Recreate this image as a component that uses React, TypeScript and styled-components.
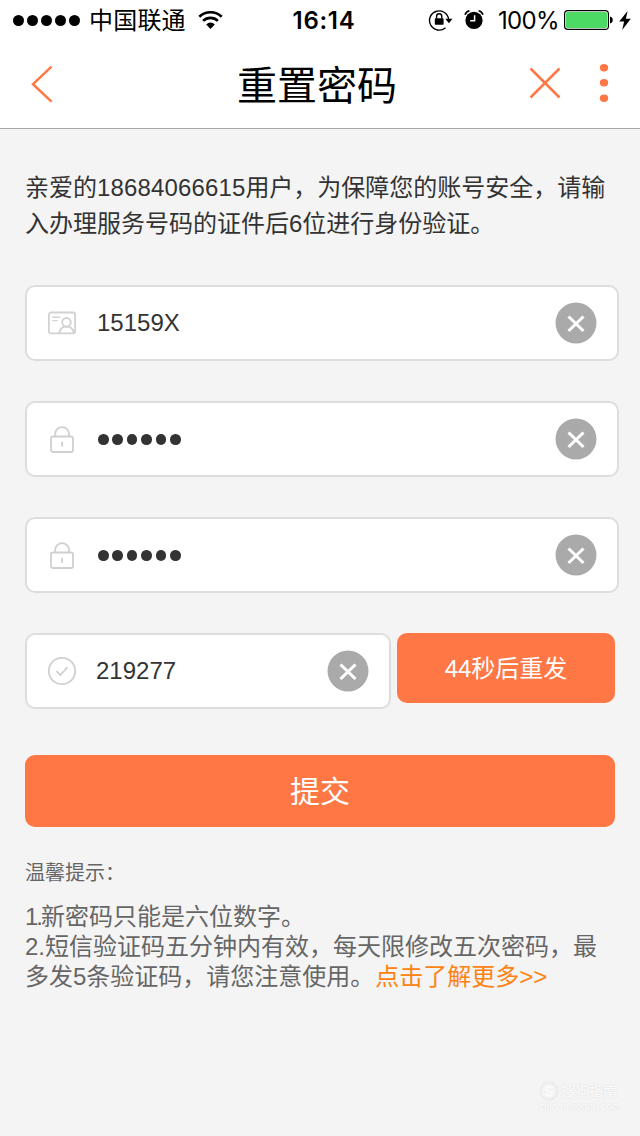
import React from "react";
import styled, { createGlobalStyle } from "styled-components";

const GlobalStyle = createGlobalStyle`
  * { box-sizing: border-box; }
  body {
    margin: 0;
    background: #f4f4f4;
    font-family: "Liberation Sans", "Noto Sans CJK SC", sans-serif;
  }
  button { border: 0; padding: 0; background: none; font: inherit; }
  p, h1, h2 { margin: 0; font-weight: 400; }
  svg { display: block; flex: none; }
`;

const ORANGE = "#ff7744";

const Screen = styled.div`
  width: 640px;
  height: 1136px;
  display: flex;
  flex-direction: column;
  background: #f4f4f4;
  overflow: hidden;
`;

const TopArea = styled.header`
  height: 129px;
  background: #fff;
  border-bottom: 1px solid #a8a8a8;
`;

const StatusBar = styled.div`
  height: 40px;
  display: grid;
  grid-template-columns: 240px 160px 240px;
  align-items: center;
  color: #000;
  font-family: Inter, "Noto Sans CJK SC", sans-serif;
`;

const StatusLeft = styled.div`
  display: flex;
  align-items: center;
  padding-left: 13px;
`;

const Dots = styled.div<{ $gap: number }>`
  display: flex;
  gap: ${(p) => p.$gap}px;
`;

const Dot = styled.i<{ $size: number; $color: string }>`
  width: ${(p) => p.$size}px;
  height: ${(p) => p.$size}px;
  border-radius: 50%;
  background: ${(p) => p.$color};
`;

const Carrier = styled.span`
  margin: 0 12px 0 9px;
  padding-top: 2px;
  font-size: 24px;
  line-height: 38px;
  letter-spacing: 0.2px;
`;

const Clock = styled.span`
  padding: 2px 0 0 8px;
  text-align: center;
  font-size: 24px;
  font-weight: 600;
  line-height: 38px;
  letter-spacing: 0.7px;
`;

const StatusRight = styled.div`
  display: flex;
  align-items: center;
  padding-left: 28px;
`;

const Percent = styled.span`
  width: 60px;
  margin: 0 6px 0 14px;
  padding-top: 2px;
  font-size: 24px;
  line-height: 38px;
  letter-spacing: -0.7px;
  white-space: nowrap;
`;

const IconGap = styled.span<{ $width: number }>`
  flex: 0 0 ${(p) => p.$width}px;
`;

const NavBar = styled.nav`
  height: 88px;
  display: grid;
  grid-template-columns: 160px 314px 166px;
  align-items: center;
`;

const BackButton = styled.button`
  padding-left: 30px;
`;

const Title = styled.h1`
  padding-top: 4px;
  font-size: 40px;
  line-height: 84px;
  text-align: center;
  color: #000;
`;

const NavActions = styled.div`
  display: flex;
  align-items: center;
  gap: 37px;
  padding-left: 54px;
  margin-top: -2px;
`;

const Content = styled.main`
  padding: 41px 21px 0 25px;
`;

const Intro = styled.p`
  width: 586px;
  font-size: 24px;
  line-height: 36px;
  color: #333;
  white-space: nowrap;
`;

const PhoneNumber = styled.span`
  letter-spacing: 0.14px;
`;

const Form = styled.form`
  display: flex;
  flex-direction: column;
  gap: 40px;
  margin-top: 43px;
`;

const Field = styled.div<{ $width?: number }>`
  width: ${(p) => p.$width ?? 594}px;
  height: 76px;
  display: flex;
  align-items: center;
  padding: 0 20px;
  background: #fff;
  border: 2px solid #dddddd;
  border-radius: 10px;
`;

const FieldValue = styled.div<{ $indent?: number }>`
  flex: 1;
  padding-left: ${(p) => p.$indent ?? 19}px;
  font-size: 24px;
  line-height: 32px;
  color: #333;
`;

const PasswordValue = styled(FieldValue)`
  padding-top: 1px;
`;

const CodeRow = styled.div`
  display: flex;
  gap: 6px;
`;

const ResendButton = styled.button`
  width: 218px;
  height: 70px;
  padding-bottom: 4px;
  border-radius: 10px;
  background: ${ORANGE};
  color: #fff;
  font-size: 24px;
`;

const SubmitButton = styled.button`
  width: 590px;
  height: 72px;
  padding-bottom: 5px;
  margin-top: 6px;
  border-radius: 10px;
  background: ${ORANGE};
  color: #fff;
  font-size: 30px;
`;

const Tips = styled.section`
  margin-top: 31px;
  color: #666;
`;

const TipsTitle = styled.h2`
  font-size: 20px;
  line-height: 30px;
`;

const TipsText = styled.p`
  margin-top: 14px;
  font-size: 24px;
  line-height: 30px;
  white-space: nowrap;
`;

const TightNumber = styled.span`
  letter-spacing: -2px;
`;

const MoreLink = styled.a`
  margin-left: 1px;
  color: #ff8212;
`;

const Watermark = styled.footer`
  margin: auto 21px 23px auto;
  width: 80px;
  color: #fbfbfb;
`;

const WatermarkBrand = styled.div`
  display: flex;
  align-items: center;
  gap: 2px;
  font-size: 14px;
  line-height: 20px;
  white-space: nowrap;
  text-shadow: 0 0 2px #dcdcdc;
`;

const WatermarkSite = styled.div`
  font-size: 10px;
  line-height: 12px;
  text-shadow: 0 0 2px #dcdcdc;
`;

const WifiIcon = () => (
  <svg width="25" height="20" viewBox="0 0 25 20" fill="none" stroke="#000">
    <path d="M1.3 6.8C7.5.7 17.5.7 23.7 6.8" strokeWidth="2.7" />
    <path d="M5.1 10.9c4.1-4 10.7-4 14.8 0" strokeWidth="2.7" />
    <path d="M8.2 14.4a6 6 0 0 1 8.6 0L12.5 19z" fill="#000" stroke="none" />
  </svg>
);

const RotationLockIcon = () => (
  <svg width="26" height="24" viewBox="0 0 26 24" fill="none">
    <path d="M17.5 19.7A9.6 9.6 0 1 1 20.6 11" stroke="#000" strokeWidth="1.4" />
    <path d="M17.3 10.8h7.2L20.9 15.2z" fill="#000" />
    <rect x="6.8" y="10.2" width="8.8" height="6.6" rx=".7" fill="#000" />
    <path d="M8.6 10.5V8.4a2.6 2.6 0 0 1 5.2 0v2.1" stroke="#000" strokeWidth="1.4" />
  </svg>
);

const AlarmIcon = () => (
  <svg width="20" height="22" viewBox="0 0 20 22" fill="none">
    <circle cx="10" cy="11.4" r="8.6" fill="#000" />
    <path d="M1 5.7C1.700 3.800 3.400 2.200 5.400 1.700M19 5.700c-.7-1.900-2.400-3.500-4.400-4" stroke="#000" strokeWidth="1.600" />
    <path d="M10.600 6.200v5.600H6.200" stroke="#fff" strokeWidth="1.500" />
  </svg>
);

const BatteryIcon = () => (
  <svg width="49" height="20" viewBox="0 0 49 20">
    <rect x=".6" y=".6" width="43.8" height="18.8" rx="3.2" fill="#fff" stroke="#000" strokeWidth="1.2" />
    <rect x="2" y="2" width="41" height="16" rx="1.8" fill="#4cd964" />
    <path d="M46 6.5c3.7.7 3.7 6.3 0 7z" fill="#000" />
  </svg>
);

const BoltIcon = () => (
  <svg width="12" height="19" viewBox="0 0 12 19">
    <path d="M8.6 0 .2 10.6h4.9L3.2 19 11.8 7.7H6.9z" fill="#000" />
  </svg>
);

const BackIcon = () => (
  <svg width="24" height="38" viewBox="0 0 24 38" fill="none" stroke={ORANGE} strokeWidth="2.5">
    <path d="M21.5 1.7 3 19.2l18.500 17.500" />
  </svg>
);

const CloseIcon = () => (
  <svg width="34" height="34" viewBox="0 0 34 34" fill="none" stroke={ORANGE} strokeWidth="2.5">
    <path d="m2.500 2.500 29 29M31.500 2.500l-29 29" />
  </svg>
);

const MoreIcon = () => (
  <svg width="10" height="38" viewBox="0 0 10 38" fill={ORANGE}>
    <ellipse cx="5" cy="3.8" rx="4.2" ry="3.7" />
    <ellipse cx="5" cy="18.7" rx="4.2" ry="3.7" />
    <ellipse cx="5" cy="34.2" rx="4.2" ry="3.7" />
  </svg>
);

const IdCardIcon = () => (
  <svg width="30" height="24" viewBox="0 0 30 24" fill="none" stroke="#d2d2d2" strokeWidth="1.8">
    <rect x="1.9" y="1.5" width="26.2" height="20.8" rx="2" />
    <path d="M5.3 6.2h8M5.3 9.6h5.4" strokeWidth="1.4" />
    <circle cx="19.500" cy="11.300" r="4.300" />
    <path d="M12.500 22c.3-4 3-6.400 7-6.400s6.800 2.400 7.200 6.400" />
  </svg>
);

const LockIcon = () => (
  <svg width="30" height="30" viewBox="0 0 30 30" fill="none" stroke="#d0d0d0" strokeWidth="1.8">
    <rect x="4" y="12.500" width="22" height="15.500" rx="2" />
    <path d="M8.200 12.300V10a6.900 6.900 0 0 1 13.800 0v2.300M15.100 17.700v5" />
  </svg>
);

const CheckCircleIcon = () => (
  <svg width="30" height="30" viewBox="0 0 30 30" fill="none" stroke="#d0d0d0" strokeWidth="1.8">
    <circle cx="15" cy="15" r="13.200" />
    <path d="m9.400 15.100 4 3.900 7.100-7.900" />
  </svg>
);

const ClearIcon = () => (
  <svg width="42" height="42" viewBox="0 0 42 42">
    <circle cx="21" cy="21" r="20.500" fill="#aaa" />
    <path d="m13.500 14.500 15 14.500M28.500 14.500 13.500 29" stroke="#fff" strokeWidth="3.100" />
  </svg>
);

const DotRow = ({ count, size, gap, color }: { count: number; size: number; gap: number; color: string }) => (
  <Dots $gap={gap}>
    {Array.from({ length: count }, (_, i) => (
      <Dot key={i} $size={size} $color={color} />
    ))}
  </Dots>
);

const PasswordField = () => (
  <Field>
    <LockIcon />
    <PasswordValue $indent={21}>
      <DotRow count={6} size={10.6} gap={3.8} color="#333" />
    </PasswordValue>
    <ClearIcon />
  </Field>
);

export default function App() {
  return (
    <Screen>
      <GlobalStyle />
      <TopArea>
        <StatusBar>
          <StatusLeft>
            <DotRow count={5} size={11} gap={3} color="#000" />
            <Carrier>中国联通</Carrier>
            <WifiIcon />
          </StatusLeft>
          <Clock>16:14</Clock>
          <StatusRight>
            <RotationLockIcon />
            <IconGap $width={10} />
            <AlarmIcon />
            <Percent>100%</Percent>
            <BatteryIcon />
            <IconGap $width={6} />
            <BoltIcon />
          </StatusRight>
        </StatusBar>
        <NavBar>
          <BackButton type="button"><BackIcon /></BackButton>
          <Title>重置密码</Title>
          <NavActions>
            <CloseIcon />
            <MoreIcon />
          </NavActions>
        </NavBar>
      </TopArea>
      <Content>
        <Intro>
          亲爱的<PhoneNumber>18684066615</PhoneNumber>用户，为保障您的账号安全，请输
          <br />
          入办理服务号码的证件后6位进行身份验证。
        </Intro>
        <Form>
          <Field>
            <IdCardIcon />
            <FieldValue $indent={20}>15159X</FieldValue>
            <ClearIcon />
          </Field>
          <PasswordField />
          <PasswordField />
          <CodeRow>
            <Field $width={366}>
              <CheckCircleIcon />
              <FieldValue>219277</FieldValue>
              <ClearIcon />
            </Field>
            <ResendButton type="button">44秒后重发</ResendButton>
          </CodeRow>
          <SubmitButton type="button">提交</SubmitButton>
        </Form>
        <Tips>
          <TipsTitle>温馨提示：</TipsTitle>
          <TipsText>
            <TightNumber>1.</TightNumber>新密码只能是六位数字。
            <br />
            2.短信验证码五分钟内有效，每天限修改五次密码，最
            <br />
            多发5条验证码，请您注意使用。<MoreLink>点击了解更多&gt;&gt;</MoreLink>
          </TipsText>
        </Tips>
      </Content>
      <Watermark>
        <WatermarkBrand>
          <svg width="20" height="20" viewBox="0 0 20 20" fill="none" stroke="#fbfbfb" strokeWidth="2">
            <circle cx="10" cy="10" r="8.5" stroke="#ececec" />
            <path d="M13.5 7C12 5.2 7 5 7 7.8S13.5 9.6 13.5 12.3 8 15 6.3 13" />
          </svg>
          搜狗指南
        </WatermarkBrand>
        <WatermarkSite>zhinan.sogou.com</WatermarkSite>
      </Watermark>
    </Screen>
  );
}
